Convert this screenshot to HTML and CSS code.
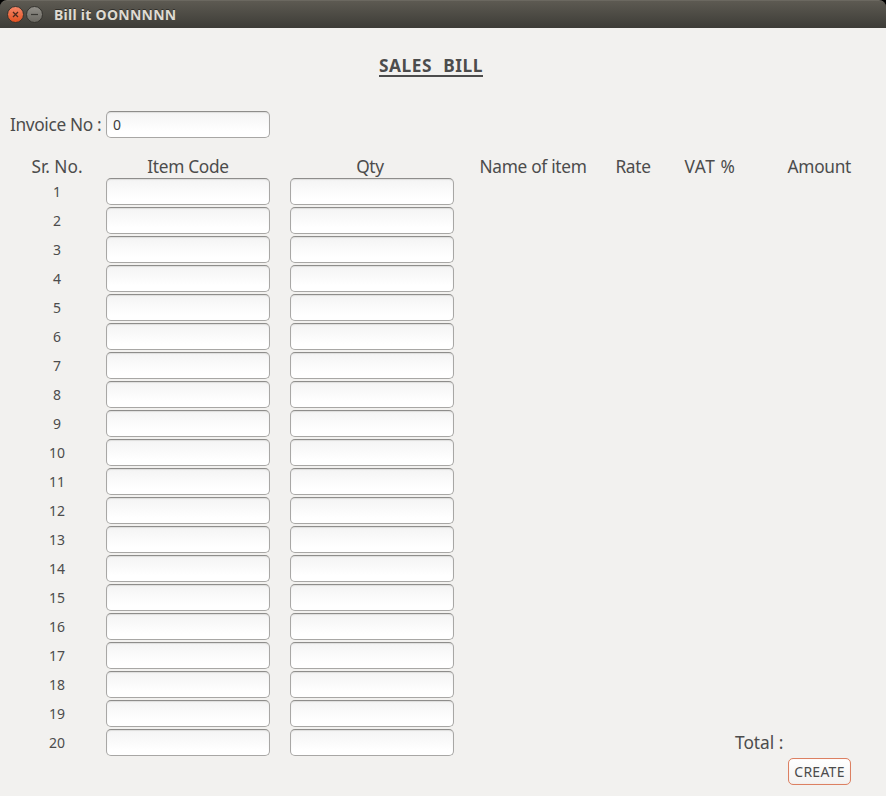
FILE: index.html
```html
<!DOCTYPE html>
<html lang="en">
<head>
<meta charset="utf-8">
<title>Bill it OONNNNN</title>
<link rel="stylesheet" href="styles.css">
</head>
<body>
<header class="titlebar">
  <svg class="controls" width="38" height="20" viewBox="0 0 38 20" aria-hidden="true">
    <defs>
      <linearGradient id="close" x1="0" y1="0" x2="0" y2="1"><stop offset="0" stop-color="#f5886a"/><stop offset="1" stop-color="#e2501f"/></linearGradient>
      <linearGradient id="min" x1="0" y1="0" x2="0" y2="1"><stop offset="0" stop-color="#92908a"/><stop offset="1" stop-color="#6a6861"/></linearGradient>
    </defs>
    <circle cx="10.5" cy="8.5" r="8" fill="url(#close)" stroke="#34332e"/>
    <path d="M8 6l5 5M13 6l-5 5" stroke="#4b2a1e" stroke-width="1.3"/>
    <circle cx="29.5" cy="8.5" r="8" fill="url(#min)" stroke="#34332e"/>
    <path d="M26 8.5h7" stroke="#3a3934" stroke-width="1.2"/>
  </svg>
  <span class="window-title">Bill it OONNNNN</span>
</header>
<main>
  <h1><span>SALES&nbsp; BILL</span></h1>
  <div class="invoice"><label for="invoice">Invoice No :</label><input id="invoice" value="0"></div>
  <div class="row head"><span class="sr">Sr. No.</span><span class="code">Item Code</span><span class="qty">Qty</span><span class="name">Name of item</span><span class="rate">Rate</span><span class="vat">VAT %</span><span class="amount">Amount</span></div>
  <div class="row"><span>1</span><input><input></div>
  <div class="row"><span>2</span><input><input></div>
  <div class="row"><span>3</span><input><input></div>
  <div class="row"><span>4</span><input><input></div>
  <div class="row"><span>5</span><input><input></div>
  <div class="row"><span>6</span><input><input></div>
  <div class="row"><span>7</span><input><input></div>
  <div class="row"><span>8</span><input><input></div>
  <div class="row"><span>9</span><input><input></div>
  <div class="row"><span>10</span><input><input></div>
  <div class="row"><span>11</span><input><input></div>
  <div class="row"><span>12</span><input><input></div>
  <div class="row"><span>13</span><input><input></div>
  <div class="row"><span>14</span><input><input></div>
  <div class="row"><span>15</span><input><input></div>
  <div class="row"><span>16</span><input><input></div>
  <div class="row"><span>17</span><input><input></div>
  <div class="row"><span>18</span><input><input></div>
  <div class="row"><span>19</span><input><input></div>
  <div class="row"><span>20</span><input><input><span class="total">Total :</span></div>
  <div class="actions"><button>CREATE</button></div>
</main>
</body>
</html>
```
FILE: styles.css
```css
* { box-sizing: border-box; }
html { background: #000; }
body {
  margin: 0;
  height: 796px;
  overflow: hidden;
  color: #4c4c4c;
  font: 14px/27px "Noto Sans", "Open Sans", sans-serif;
  white-space: nowrap;
}
.titlebar {
  height: 28px;
  display: flex;
  padding: 5px 0 0 5px;
  background: linear-gradient(#5d5a52, #3d3c37);
  border-top: 1px solid #6b6860;
  border-radius: 7px 7px 0 0;
}
.controls { flex: none; }
.window-title {
  margin-left: 11px;
  line-height: 18px;
  font-size: 14px;
  font-weight: 700;
  letter-spacing: .27px;
  color: #dfdbd2;
  text-shadow: 0 -1px #302f2b;
}
main { height: 768px; padding: 24px 0 0 10px; background: #f2f1ef; }
h1 {
  margin: 0 0 31px 369px;
  height: 28px;
  font-size: 17.3px;
  line-height: 28px;
  font-weight: 700;
  letter-spacing: .55px;
  word-spacing: .5px;
}
h1 span { display: inline-block; width: 104px; height: 25px; border-bottom: 2px solid #4c4c4c; }
.invoice { display: flex; height: 27px; margin-bottom: 18px; }
.invoice label { width: 96px; font-size: 17.3px; letter-spacing: -.35px; }
.row {
  display: grid;
  grid-template-columns: 94px 164px 182px auto;
  justify-content: start;
  column-gap: 2px;
  height: 27px;
  margin-bottom: 2px;
}
.row > span { text-align: center; }
.row > input:nth-of-type(2) { margin-left: 18px; }
.head {
  grid-template-columns: 94px 168px 196px 130px 70px 84px 99px;
  column-gap: 0;
  height: 22px;
  margin-bottom: 0;
  font-size: 17.3px;
  line-height: 21px;
  letter-spacing: -.3px;
}
.head .sr { letter-spacing: 0; }
.head .vat { letter-spacing: .6px; }
.row.head .amount { text-align: right; }
input {
  width: 164px;
  height: 27px;
  padding: 0 6px;
  border: 1px solid #a8a7a5;
  border-top-color: #8e8d8b;
  border-radius: 5px;
  background: linear-gradient(#f4f4f4, #fff 80%);
  box-shadow: inset 0 1px 1px #dededd;
  font: inherit;
  color: #3c3c3c;
}
.row .total { margin-left: 279px; font-size: 17.3px; line-height: 27px; letter-spacing: 0; }
.actions { width: 841px; display: flex; justify-content: flex-end; }
button {
  width: 63px;
  height: 27px;
  padding: 0;
  border: 1px solid #dc8062;
  border-radius: 5px;
  background: linear-gradient(#fff, #f3f2f1);
  box-shadow: inset 0 0 1px #f4cabc;
  color: #4c4c4c;
  font: 14px/25px "Noto Sans", "Open Sans", sans-serif;
  letter-spacing: .25px;
}
```
